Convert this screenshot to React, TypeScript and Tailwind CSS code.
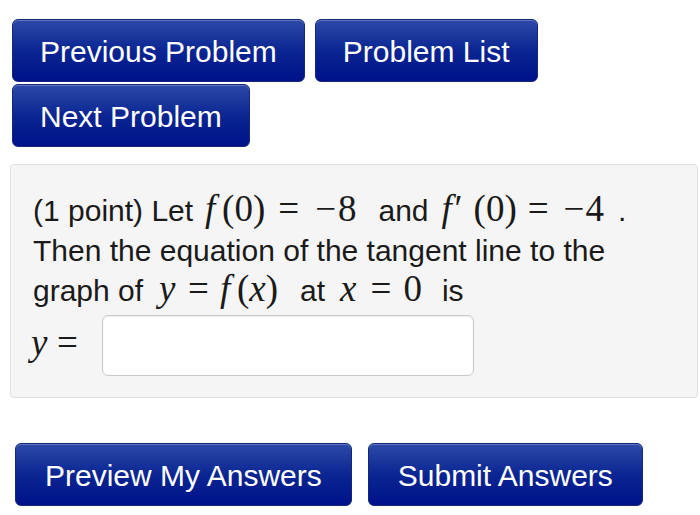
import React from "react";

const btn =
  "flex items-center h-[63px] pt-[2px] rounded-[6px] border border-[#13287c] bg-linear-to-b from-[#2c49a8] via-[#0b2592] to-[#00108a] text-white text-[30px] leading-none whitespace-nowrap shadow-[inset_0_1px_0_rgba(255,255,255,0.25)]";

const m = "font-['Liberation_Serif',serif] text-[37px] leading-[36px]";

export default function App() {
  return (
    <div className="w-[700px] h-[515px] bg-white overflow-hidden font-['Liberation_Sans',Arial,sans-serif]">
      <div className="pt-[19px] pl-[12px]">
        <div className="flex gap-[10px]">
          <button className={`${btn} px-[27px]`}>Previous Problem</button>
          <button className={`${btn} px-[27px]`}>Problem List</button>
        </div>
        <div className="flex mt-[2px]">
          <button className={`${btn} px-[27px]`}>Next Problem</button>
        </div>
      </div>

      <div className="ml-[10px] mt-[17px] w-[688px] h-[234px] rounded-[4px] border border-[#e0e0e0] bg-[#f5f5f5] pt-[26px] pl-[22px] text-[30px] text-[#1a1a1a]">
        <div className="h-[40px] leading-[40px] whitespace-nowrap">
          <span>(1 point) Let</span>
          <span className={`${m} italic inline-block w-[17px] ml-[12px]`}>f</span>
          <span className={m}>(</span>
          <span className={m}>0</span>
          <span className={m}>)</span>
          <span className={`${m} ml-[13px]`}>=</span>
          <span className={`${m} ml-[16px]`}>−</span>
          <span className={`${m} ml-[2px]`}>8</span>
          <span className="ml-[22px]">and</span>
          <span className={`${m} italic inline-block w-[13px] ml-[13px]`}>f</span>
          <span className={`${m} inline-block w-[19px]`}>′</span>
          <span className={m}>(</span>
          <span className={m}>0</span>
          <span className={m}>)</span>
          <span className={`${m} ml-[11px]`}>=</span>
          <span className={`${m} ml-[15px]`}>−</span>
          <span className={`${m} ml-[1px]`}>4</span>
          <span className="ml-[14px]">.</span>
        </div>
        <div className="h-[40px] leading-[40px] whitespace-nowrap">
          Then the equation of the tangent line to the
        </div>
        <div className="h-[40px] leading-[40px] whitespace-nowrap">
          <span>graph of</span>
          <span className={`${m} italic inline-block w-[17px] ml-[16px]`}>y</span>
          <span className={`${m} ml-[12px]`}>=</span>
          <span className={`${m} italic inline-block w-[17px] ml-[11px]`}>f</span>
          <span className={m}>(</span>
          <span className={`${m} italic`}>x</span>
          <span className={m}>)</span>
          <span className="ml-[22px]">at</span>
          <span className={`${m} italic ml-[15px]`}>x</span>
          <span className={`${m} ml-[14px]`}>=</span>
          <span className={`${m} ml-[12px]`}>0</span>
          <span className="ml-[20px]">is</span>
        </div>
        <div className="flex items-center mt-[4px]">
          <div className="flex items-center mb-[6px] whitespace-nowrap leading-[40px]">
            <span className={`${m} italic inline-block w-[17px] -ml-[2px]`}>y</span>
            <span className={`${m} ml-[9px]`}>=</span>
          </div>
          <input
            type="text"
            className="ml-[24px] w-[372px] h-[61px] rounded-[6px] border border-[#c9c9c9] bg-white shadow-[inset_0_1px_2px_rgba(0,0,0,0.08)] outline-none"
          />
        </div>
      </div>

      <div className="flex gap-[16px] ml-[15px] mt-[45px]">
        <button className={`${btn} px-[29px]`}>Preview My Answers</button>
        <button className={`${btn} px-[29px]`}>Submit Answers</button>
      </div>
    </div>
  );
}
